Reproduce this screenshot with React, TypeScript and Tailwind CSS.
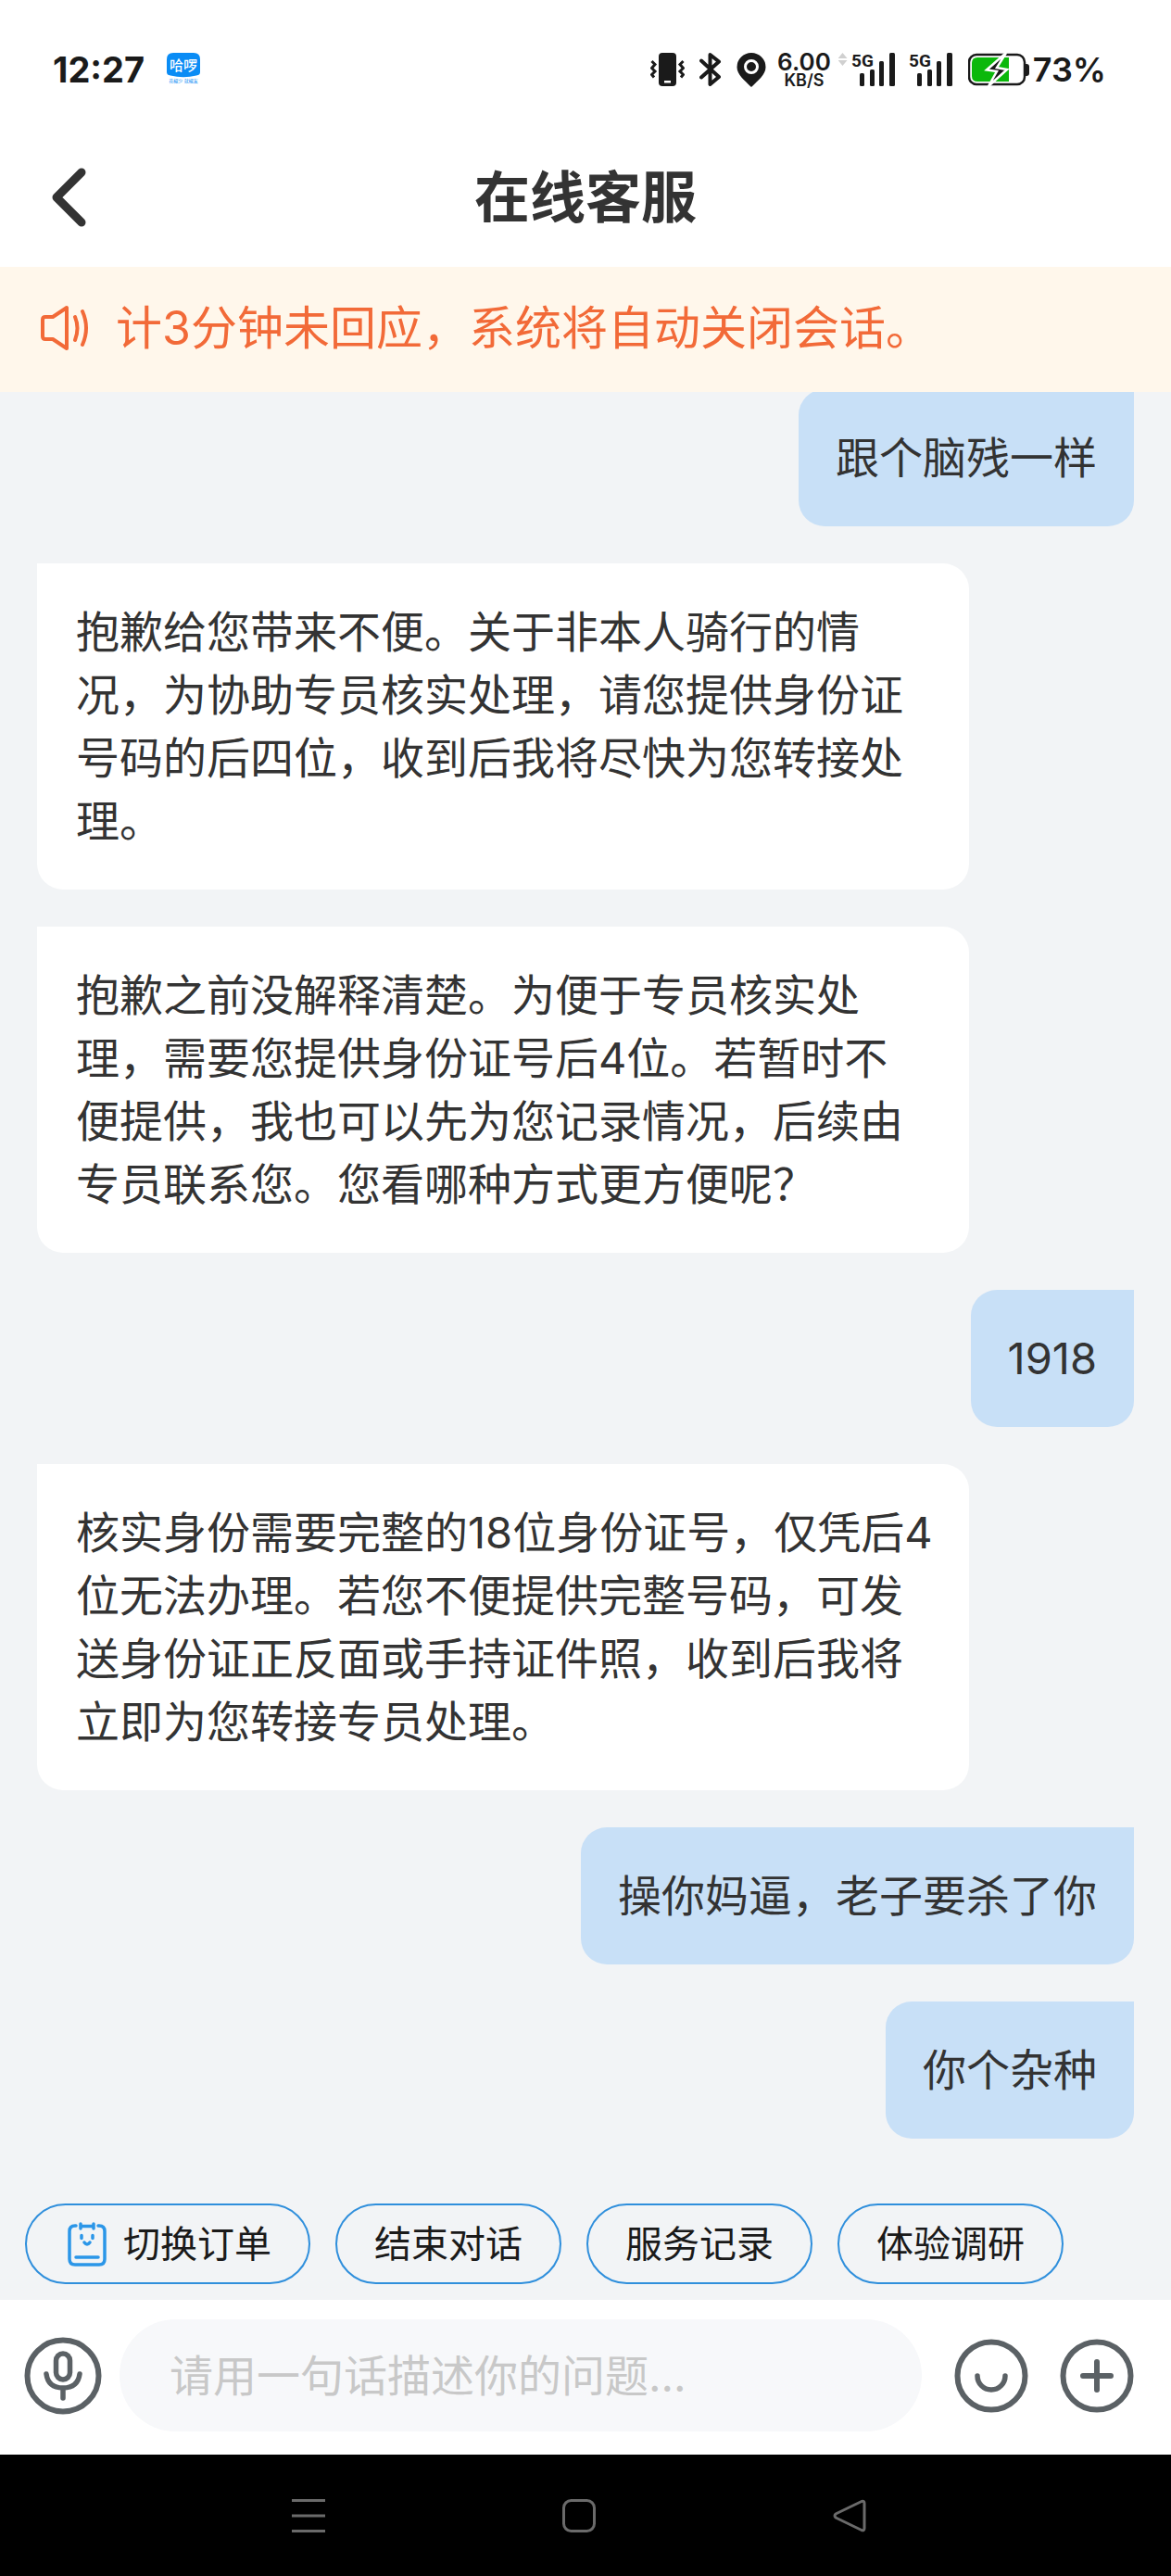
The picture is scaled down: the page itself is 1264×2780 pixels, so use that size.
import { useState } from 'react';

type Message = {
  id: number;
  from: 'agent' | 'user';
  text: string;
};

const messages: Message[] = [
  { id: 1, from: 'user', text: '跟个脑残一样' },
  {
    id: 2,
    from: 'agent',
    text: '抱歉给您带来不便。关于非本人骑行的情况，为协助专员核实处理，请您提供身份证号码的后四位，收到后我将尽快为您转接处理。',
  },
  {
    id: 3,
    from: 'agent',
    text: '抱歉之前没解释清楚。为便于专员核实处理，需要您提供身份证号后4位。若暂时不\n便提供，我也可以先为您记录情况，后续由专员联系您。您看哪种方式更方便呢？',
  },
  { id: 4, from: 'user', text: '1918' },
  {
    id: 5,
    from: 'agent',
    text: '核实身份需要完整的18位身份证号，仅凭后4位无法办理。若您不便提供完整号码，可发\n送身份证正反面或手持证件照，收到后我将立即为您转接专员处理。',
  },
  { id: 6, from: 'user', text: '操你妈逼，老子要杀了你' },
  { id: 7, from: 'user', text: '你个杂种' },
];

const quickActions = ['切换订单', '结束对话', '服务记录', '体验调研'];

function AppBadge() {
  return (
    <svg width="36" height="36" viewBox="0 0 36 36" className="ml-6">
      <path d="M7 0h22q7 0 7 7v14q0 3-4 3.500Q18 28 4 24.500Q0 24 0 21V7Q0 0 7 0z" fill="#0a8cf5" />
      <text x="18" y="19" fontSize="15" fontWeight="500" textAnchor="middle" fill="#fff">
        哈啰
      </text>
      <text x="18" y="32" fontSize="5" textAnchor="middle" fill="#0a8cf5">
        花椒少 就椒友
      </text>
    </svg>
  );
}

function VibrateIcon() {
  return (
    <svg width="37" height="36" viewBox="0 0 37 36" fill="none" stroke="#1a1a1a" strokeWidth="3">
      <rect x="9" y="0" width="19" height="36" rx="4" fill="#1a1a1a" stroke="none" />
      <rect x="15" y="30" width="7" height="2.500" fill="#fff" stroke="none" />
      <path d="M1.500 9l3.500 3.500-3.500 4 3.500 3.500-3.500 3.500 2.500 3" />
      <path d="M35.500 9L32 12.500l3.500 4L32 20l3.500 3.500-2.500 3" />
    </svg>
  );
}

function BluetoothIcon() {
  return (
    <svg
      width="24"
      height="36"
      viewBox="0 0 24 36"
      fill="none"
      stroke="#1a1a1a"
      strokeWidth="4"
      strokeLinejoin="round"
      strokeLinecap="round"
    >
      <path d="M2 8.500L21 26l-9.500 8V2L21 9.500 2 26.500" />
    </svg>
  );
}

function LocationIcon() {
  return (
    <svg width="32" height="37" viewBox="0 0 32 37">
      <path d="M16 0a15.500 15.500 0 0 1 15.500 15.500c0 8-8.500 14.500-15.500 21.500C9 30 .500 23.500.500 15.500A15.500 15.500 0 0 1 16 0z" fill="#1a1a1a" />
      <circle cx="16" cy="15" r="6.500" fill="none" stroke="#fff" strokeWidth="3" />
    </svg>
  );
}

function SignalIcon({ arrows = false }: { arrows?: boolean }) {
  return (
    <svg
      width={arrows ? 62 : 48}
      height="52"
      viewBox={arrows ? '-14 -8 62 52' : '0 -8 48 52'}
      fill="#1a1a1a"
    >
      {arrows && <path d="M-9.500 0l5 6h-10zM-9.500 14l5-6h-10z" fill="#d0d0d0" />}
      <text x="0" y="15" fontSize="19" fontWeight="700" fontFamily="Roboto, sans-serif">
        5G
      </text>
      <rect x="9" y="22" width="5" height="14" rx="1.500" />
      <rect x="20" y="18" width="5" height="18" rx="1.500" />
      <rect x="30" y="9" width="5" height="27" rx="1.500" />
      <rect x="41" y="0" width="6" height="36" rx="1.500" />
    </svg>
  );
}

function BatteryIcon() {
  return (
    <svg width="66" height="38" viewBox="0 0 66 38" fill="none">
      <rect x="1" y="3" width="60" height="32" rx="8" stroke="#1a1a1a" strokeWidth="2.500" />
      <path d="M10 6h34v26H10q-6 0-6-6V12q0-6 6-6z" fill="#0bb80b" />
      <path d="M62 13h1q3 0 3 3v7q0 3-3 3h-1z" fill="#1a1a1a" />
      <path d="M41 1L20 19.500l11 1.500-9 16 20-18-11-2z" fill="#1a1a1a" stroke="#fff" strokeWidth="2.500" />
    </svg>
  );
}

function StatusBar() {
  return (
    <div className="flex h-[150px] shrink-0 items-center bg-white pr-[70px] pl-[57px] text-[#1a1a1a]">
      <span className="text-[38px] leading-none font-bold">12:27</span>
      <AppBadge />
      <div className="ml-auto flex items-center">
        <VibrateIcon />
        <span className="ml-4">
          <BluetoothIcon />
        </span>
        <span className="ml-4">
          <LocationIcon />
        </span>
        <div className="ml-3 flex flex-col items-center font-semibold">
          <span className="text-[26px] leading-6">6.00</span>
          <span className="text-[18px] leading-4">KB/S</span>
        </div>
        <span className="ml-2">
          <SignalIcon arrows />
        </span>
        <span className="ml-3.5">
          <SignalIcon />
        </span>
        <span className="ml-4">
          <BatteryIcon />
        </span>
        <span className="ml-1 text-[36px] leading-none font-semibold">73%</span>
      </div>
    </div>
  );
}

function Header() {
  return (
    <header className="grid h-[138px] shrink-0 grid-cols-[1fr_auto_1fr] items-center bg-white px-[52px] pb-3">
      <button type="button" aria-label="返回" className="justify-self-start">
        <svg
          width="44"
          height="66"
          viewBox="0 0 44 66"
          fill="none"
          stroke="#333"
          strokeWidth="9"
          strokeLinecap="round"
          strokeLinejoin="round"
        >
          <path d="M36 6L9 33l27 27" />
        </svg>
      </button>
      <h1 className="text-[60px] leading-none font-bold text-[#333]">在线客服</h1>
    </header>
  );
}

function Notice() {
  return (
    <div className="flex h-[135px] shrink-0 items-center bg-[#fff7eb] pb-1 pl-[43px] text-[#f26a38]">
      <svg
        width="54"
        height="50"
        viewBox="0 0 54 50"
        fill="none"
        stroke="currentColor"
        strokeWidth="4"
        strokeLinejoin="round"
        strokeLinecap="round"
      >
        <path d="M6 13h8L29 3v44L14 37H6q-3 0-3-3V16q0-3 3-3z" />
        <path d="M38 13q5 12 0 25M46 7q8 18 0 36" />
      </svg>
      <p className="ml-7 text-[50px] leading-none">计3分钟未回应，系统将自动关闭会话。</p>
    </div>
  );
}

function Bubble({ message }: { message: Message }) {
  if (message.from === 'user') {
    return (
      <p className="self-end rounded-[28px] rounded-tr-none bg-[#c8e0f7] p-10 text-[47px] leading-[68px]">
        {message.text}
      </p>
    );
  }
  return (
    <p className="w-[85%] self-start rounded-[28px] rounded-tl-none bg-white py-10 pr-8 pl-[42px] text-[47px] leading-[68px] whitespace-pre-line">
      {message.text}
    </p>
  );
}

function OrderIcon() {
  return (
    <svg
      width="50"
      height="48"
      viewBox="0 0 50 48"
      fill="none"
      stroke="#2b96e8"
      strokeWidth="3.500"
      strokeLinecap="round"
    >
      <path d="M13 4h-1q-6 0-6 6v30q0 6 6 6h26q6 0 6-6V10q0-6-6-6h-1" />
      <path d="M18 2v5M32 2v5M18 4.500h14" />
      <path d="M19 14.500v3M31 14.500v3M22 22q3 4 6 0M13 38h24" />
    </svg>
  );
}

function MicIcon() {
  return (
    <svg width="84" height="84" viewBox="0 0 84 84" fill="none" stroke="#5b6165" strokeWidth="6" strokeLinecap="round">
      <circle cx="42" cy="42" r="38.500" />
      <rect x="34.500" y="18" width="15" height="28" rx="7.500" strokeWidth="5.500" />
      <path d="M24 40q2 15 18 15t18-15M42 55v11" strokeWidth="5.500" />
    </svg>
  );
}

function InputBar() {
  const [value, setValue] = useState('');

  return (
    <form
      className="flex h-[167px] shrink-0 items-center bg-white pr-10 pb-1 pl-[26px]"
      onSubmit={(e) => e.preventDefault()}
    >
      <button type="button" aria-label="语音输入">
        <MicIcon />
      </button>
      <input
        type="text"
        aria-label="问题描述"
        value={value}
        onChange={(e) => setValue(e.target.value)}
        placeholder="请用一句话描述你的问题..."
        className="ml-[19px] h-[121px] min-w-0 flex-1 rounded-full bg-[#f7f8fa] px-[54px] text-[47px] outline-none placeholder:text-[#c8c8c8]"
      />
      <button type="button" aria-label="表情" className="ml-[35px]">
        <svg width="80" height="80" viewBox="0 0 80 80" fill="none" stroke="#5b6165" strokeWidth="6" strokeLinecap="round">
          <circle cx="40" cy="40" r="36.500" />
          <path d="M25 40a15 15 0 0 0 30 0" strokeWidth="5.500" />
        </svg>
      </button>
      <button type="button" aria-label="更多" className="ml-[34px]">
        <svg width="80" height="80" viewBox="0 0 80 80" fill="none" stroke="#5b6165" strokeWidth="6" strokeLinecap="round">
          <circle cx="40" cy="40" r="36.500" />
          <path d="M40 25v30M25 40h30" />
        </svg>
      </button>
    </form>
  );
}

function NavBar() {
  return (
    <nav className="flex h-[131px] shrink-0 items-center justify-center gap-64 bg-black pr-3.5">
      <button type="button" aria-label="最近任务">
        <svg width="36" height="36" viewBox="0 0 36 36" stroke="#6a6a6a" strokeWidth="3">
          <path d="M0 1.500h36M0 18h36M0 34.500h36" />
        </svg>
      </button>
      <button type="button" aria-label="主屏幕">
        <svg width="36" height="36" viewBox="0 0 36 36" fill="none" stroke="#6a6a6a" strokeWidth="3">
          <rect x="1.500" y="1.500" width="33" height="33" rx="8" />
        </svg>
      </button>
      <button type="button" aria-label="后退">
        <svg width="36" height="36" viewBox="0 0 36 36" fill="none" stroke="#6a6a6a" strokeWidth="3" strokeLinejoin="round">
          <path d="M31 2.500L3 16q-2 2 0 4l28 13.500q3 1 3-2v-27q0-3-3-2z" />
        </svg>
      </button>
    </nav>
  );
}

export default function App() {
  return (
    <div className="flex h-screen flex-col bg-[#f2f4f6] font-[Inter,'Noto_Sans_CJK_SC',sans-serif] text-[#333]">
      <StatusBar />
      <Header />
      <Notice />
      {/* newest messages stay at the bottom, older ones run up under the notice */}
      <main className="flex min-h-0 flex-1 flex-col justify-end gap-10 overflow-hidden px-10 pb-[70px]">
        {messages.map((message) => (
          <Bubble key={message.id} message={message} />
        ))}
      </main>
      <div className="flex shrink-0 gap-[27px] px-[27px] pb-[17px]">
        {quickActions.map((label, i) => (
          <button
            key={label}
            type="button"
            className="flex h-[87px] items-center rounded-full border-2 border-[#2f8fdc] px-10 text-[40px] leading-none text-[#1a1a1a]"
          >
            {i === 0 && (
              <span className="mr-3.5">
                <OrderIcon />
              </span>
            )}
            {label}
          </button>
        ))}
      </div>
      <InputBar />
      <NavBar />
    </div>
  );
}
